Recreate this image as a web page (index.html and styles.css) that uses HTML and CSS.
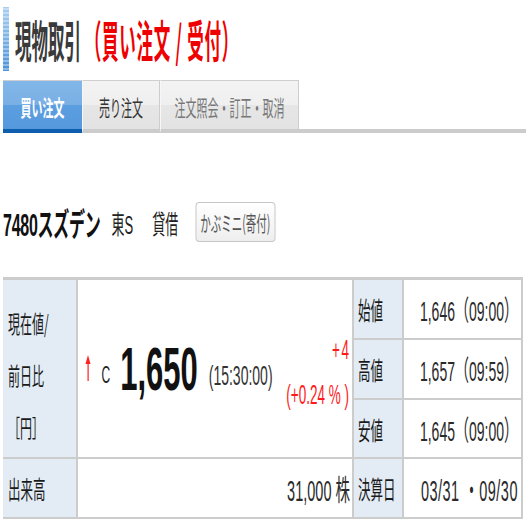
FILE: index.html
```html
<!DOCTYPE html>
<html lang="ja">
<head>
<meta charset="utf-8">
<title>現物取引（買い注文 / 受付）</title>
<link rel="stylesheet" href="styles.css">
</head>
<body>
<div class="frame">
<div class="page">
  <header class="title-bar">
    <span class="title-mark"></span>
    <h1 class="title"><span class="title-main">現物取引</span><span class="title-sub">（買い注文 / 受付）</span></h1>
  </header>

  <nav class="tabs">
    <a class="tab tab-active">買い注文</a>
    <a class="tab tab-sell">売り注文</a>
    <a class="tab tab-muted">注文照会・訂正・取消</a>
    <span class="tab-fill"></span>
  </nav>

  <div class="stock">
    <span class="stock-name">7480スズデン</span>
    <span class="stock-market">東S</span>
    <span class="stock-margin">貸借</span>
    <button class="kabumini">かぶミニ(寄付)</button>
  </div>

  <div class="quote">
    <div class="cell label label-price">
      <span class="label-line">現在値/</span>
      <span class="label-line">前日比</span>
      <span class="label-line">［円］</span>
    </div>
    <div class="cell price">
      <svg class="up-arrow" viewBox="0 0 12 26" width="12" height="26" aria-hidden="true">
        <polygon points="1,9 6,0 11,9" fill="#ff2020"/>
        <rect x="5" y="6" width="2.4" height="20" fill="#ff2020"/>
      </svg>
      <span class="price-flag">C</span>
      <span class="price-value">1,650</span>
      <span class="price-time">(15:30:00)</span>
      <span class="price-change">
        <span class="change-line change-abs">+4</span>
        <span class="change-line">(+0.24 % )</span>
      </span>
    </div>
    <div class="cell label sub-label row1">始値</div>
    <div class="cell value row1">1,646（09:00）</div>
    <div class="cell label sub-label row2">高値</div>
    <div class="cell value row2">1,657（09:59）</div>
    <div class="cell label sub-label row3">安値</div>
    <div class="cell value row3">1,645（09:00）</div>

    <div class="cell label bottom-label">出来高</div>
    <div class="cell volume">31,000 株</div>
    <div class="cell label sub-label">決算日</div>
    <div class="cell value value-big">03/31 ・09/30</div>
  </div>
</div>
</div>
</body>
</html>
```

FILE: styles.css
```css
html, body {
  margin: 0;
  padding: 0;
  background: #fff;
  overflow: hidden;
}

.frame {
  width: 526px;
  height: 526px;
  overflow: hidden;
}

.page {
  width: 1052px;
  transform: scaleX(0.5);
  transform-origin: 0 0;
  font-family: "Liberation Sans", "Noto Sans CJK JP", sans-serif;
  color: #222;
}

/* ---------- title ---------- */
.title-bar {
  display: flex;
  align-items: center;
  height: 64px;
  margin-top: 7px;
  padding-left: 6px;
}

.title-mark {
  width: 12px;
  height: 64px;
  background:
    radial-gradient(circle, rgba(255,255,255,0.45) 1px, transparent 1.5px) 0 0 / 4px 4px,
    linear-gradient(#a9cff0, #4a92da);
}

.title {
  margin: 0 0 0 12px;
  display: inline-block;
  transform: scaleX(0.75);
  transform-origin: 0 50%;
  font-size: 44px;
  line-height: 64px;
  font-weight: bold;
  white-space: nowrap;
  font-family: "Noto Sans CJK JP", sans-serif;
}

.title-main {
  color: #3a3a3a;
}

.title-sub {
  margin-left: 10px;
  letter-spacing: 2px;
  color: #ee0000;
}

/* ---------- tabs ---------- */
.tabs {
  display: flex;
  margin-top: 9px;
  margin-left: 6px;
}

.tab {
  display: flex;
  align-items: center;
  justify-content: center;
  height: 46px;
  padding-top: 2px;
  box-sizing: content-box;
  border-top: 1px solid #cfcfcf;
  border-bottom: 4px solid #cccccc;
  font-size: 22px;
  font-family: "Noto Sans CJK JP", sans-serif;
  text-decoration: none;
}

.tab-active {
  width: 158px;
  color: #fff;
  font-weight: bold;
  background: linear-gradient(#82b7e9 0, #7aafe4 50%, #5c9fe0 50%, #5598dc 100%);
  border-bottom-color: #0d5eae;
}

.tab-sell {
  width: 152px;
  color: #333;
  background: linear-gradient(#f3f3f3 0, #efefef 50%, #e6e6e6 50%, #e3e3e3 100%);
  border-left: 2px solid #f7f7f7;
  border-right: 2px solid #cdcdcd;
}

.tab-muted {
  width: 274px;
  color: #777;
  background: linear-gradient(#f3f3f3 0, #efefef 50%, #e6e6e6 50%, #e3e3e3 100%);
  border-left: 2px solid #f7f7f7;
  border-right: 2px solid #cdcdcd;
}

.tab-fill {
  flex: 1;
  border-bottom: 4px solid #cccccc;
}

/* ---------- stock line ---------- */
.stock {
  display: flex;
  align-items: center;
  height: 40px;
  margin-top: 69px;
  padding-left: 6px;
}

.stock-name {
  font-size: 32px;
  font-weight: bold;
  color: #111;
  letter-spacing: -0.5px;
}

.stock-market {
  margin-left: 22px;
  font-size: 26px;
  color: #222;
}

.stock-margin {
  margin-left: 38px;
  font-size: 26px;
  color: #222;
}

.kabumini {
  margin-left: 34px;
  width: 160px;
  height: 40px;
  padding: 0;
  border: 2px solid #c6c6c6;
  border-top-width: 1px;
  border-bottom-width: 1px;
  border-radius: 8px / 4px;
  background: linear-gradient(#ffffff, #eeeeee);
  color: #555;
  font-size: 21px;
  font-family: "Noto Sans CJK JP", sans-serif;
}

/* ---------- quote table ---------- */
.quote {
  display: grid;
  grid-template-columns: 146px 548px 96px 234px;
  grid-template-rows: 58px 58px 57px 58px;
  column-gap: 4px;
  row-gap: 2px;
  width: 1036px;
  margin-top: 35px;
  margin-left: 6px;
  background: #cccccc;
  border-top: 3px solid #cccccc;
  border-right: 4px solid #cccccc;
  border-bottom: 2px solid #cccccc;
}

.cell {
  background: #fff;
  display: flex;
  align-items: center;
}

.label {
  background: #e3ecf5;
  color: #1a1a1a;
  font-size: 25px;
  font-family: "Noto Sans CJK JP", sans-serif;
}

.label-price {
  grid-row: 1 / 4;
  grid-column: 1;
  flex-direction: column;
  align-items: flex-start;
  justify-content: flex-start;
  padding: 17px 0 0 10px;
  font-size: 24px;
}

.label-line {
  display: block;
  line-height: 52px;
}

.price {
  grid-row: 1 / 4;
  grid-column: 2;
  padding: 0 6px 0 14px;
}

.up-arrow {
  display: block;
  margin-top: -2px;
}

.price-flag {
  margin-left: 21px;
  margin-top: 12px;
  font-size: 24px;
  line-height: 1;
  color: #222;
}

.price-value {
  margin-left: 20px;
  font-size: 62px;
  line-height: 1;
  font-weight: bold;
  color: #111;
}

.price-time {
  margin-left: 22px;
  margin-top: 14px;
  font-size: 28px;
  line-height: 1;
  color: #333;
}

.price-change {
  margin-left: auto;
  margin-top: 8px;
  display: flex;
  flex-direction: column;
  align-items: flex-end;
  color: #ff1a1a;
  font-size: 27px;
}

.change-line {
  line-height: 45px;
}

.change-abs {
  letter-spacing: 3px;
  margin-right: -3px;
}

.sub-label {
  grid-column: 3;
  padding-left: 8px;
}

.row1 { grid-row: 1; }
.row2 { grid-row: 2; }
.row3 { grid-row: 3; }

.value {
  grid-column: 4;
  justify-content: flex-end;
  padding-right: 6px;
  font-size: 28px;
  color: #2a2a2a;
  white-space: nowrap;
}

.value-big {
  font-size: 29px;
  letter-spacing: 1px;
}

.bottom-label {
  grid-column: 1;
  padding-left: 10px;
}

.volume {
  grid-column: 2;
  justify-content: flex-end;
  padding-right: 4px;
  font-size: 29px;
  color: #2a2a2a;
}
```
